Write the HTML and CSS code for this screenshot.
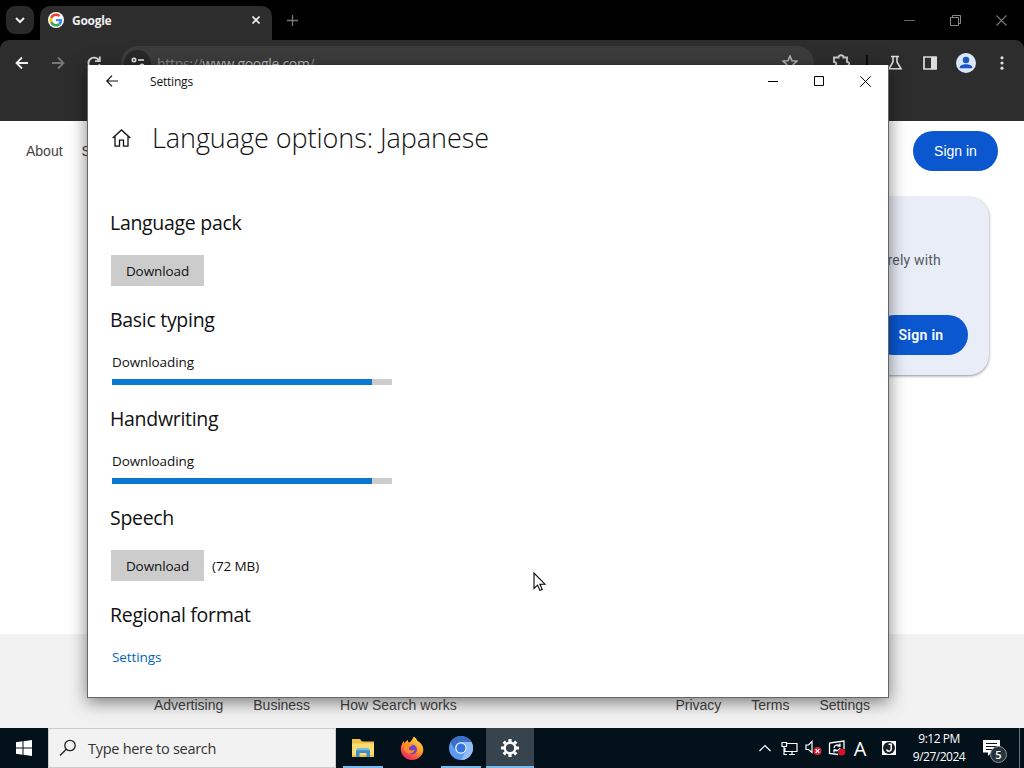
FILE: index.html
```html
<!DOCTYPE html>
<html lang="en">

<head>
  <meta charset="UTF-8">
  <meta name="viewport" content="width=device-width, initial-scale=1.0">
  <title>Language options</title>
  <link rel="stylesheet" href="styles.css">
</head>

<body>

<div class="desktop">

  <!-- Browser -->
  <div class="browser">
    <div class="tab-strip">
      <div class="tab-search">
        <svg width="10" height="10" viewBox="0 0 10 10" fill="none" stroke="#eee" stroke-width="2"><path d="M1 3l4 4 4-4"/></svg>
      </div>
      <div class="tab">
        <svg width="16" height="16" viewBox="0 0 48 48">
          <circle cx="24" cy="24" r="24" fill="#fff"/>
          <g transform="translate(4.500 4.500) scale(.81)">
            <path fill="#EA4335" d="M24 9.500c3.540 0 6.710 1.220 9.210 3.600l6.850-6.850C35.900 2.380 30.470 0 24 0 14.620 0 6.510 5.380 2.560 13.220l7.980 6.190C12.430 13.720 17.740 9.500 24 9.500z"/>
            <path fill="#4285F4" d="M46.980 24.550c0-1.570-.15-3.090-.38-4.550H24v9.020h12.940c-.58 2.960-2.260 5.480-4.780 7.180l7.730 6c4.510-4.180 7.090-10.360 7.090-17.650z"/>
            <path fill="#FBBC05" d="M10.530 28.590c-.48-1.450-.76-2.990-.76-4.590s.27-3.140.76-4.590l-7.980-6.190C.92 16.460 0 20.120 0 24s.92 7.540 2.560 10.780l7.970-6.190z"/>
            <path fill="#34A853" d="M24 48c6.480 0 11.930-2.130 15.890-5.810l-7.730-6c-2.150 1.450-4.920 2.300-8.160 2.300-6.260 0-11.570-4.220-13.470-9.910l-7.980 6.190C6.510 42.620 14.620 48 24 48z"/>
          </g>
        </svg>
        <span class="tab-title">Google</span>
        <svg width="8" height="8" viewBox="0 0 8 8" stroke="#eee" stroke-width="1.600"><path d="M.5.5l7 7M7.500.5l-7 7"/></svg>
      </div>
      <svg class="new-tab" width="11" height="11" viewBox="0 0 11 11" stroke="#777" stroke-width="1.300"><path d="M5.500 0v11M0 5.500h11"/></svg>
      <div class="browser-controls">
        <svg width="11" height="11" viewBox="0 0 11 11" stroke="#666"><path d="M0 5.500h11"/></svg>
        <svg width="11" height="11" viewBox="0 0 11 11" stroke="#888" fill="none"><path d="M.5 2.500h8v8h-8zM2.500 2.500v-2h8v8h-2"/></svg>
        <svg width="11" height="11" viewBox="0 0 11 11" stroke="#777" stroke-width="1.200"><path d="M.5.5l10 10M10.500.5l-10 10"/></svg>
      </div>
    </div>

    <div class="toolbar">
      <div class="nav-buttons">
        <svg width="14" height="14" viewBox="0 0 14 14" fill="none" stroke="#eee" stroke-width="1.800"><path d="M13 7H2M7 1.500L1.500 7 7 12.500"/></svg>
        <svg width="14" height="14" viewBox="0 0 14 14" fill="none" stroke="#777" stroke-width="1.800"><path d="M1 7h11M7 1.500L12.500 7 7 12.500"/></svg>
        <svg width="14" height="14" viewBox="0 0 14 14" fill="none" stroke="#ddd" stroke-width="1.800"><path d="M12 4.500A5.600 5.600 0 1 0 12.600 8M12.800 .5v4.700H8"/></svg>
      </div>
      <div class="omnibox">
        <div class="site-info">
          <svg width="14" height="14" viewBox="0 0 14 14" fill="none" stroke="#eee" stroke-width="1.600"><circle cx="3" cy="4" r="1.700"/><path d="M7 4h6M1 10h6"/><circle cx="11" cy="10" r="1.700"/></svg>
        </div>
        <div class="url">https://<span>www.google.com</span>/</div>
        <svg width="16" height="16" viewBox="0 0 16 16" fill="none" stroke="#bbb" stroke-width="1.500"><path d="M8 1l2 4.700 5 .4-3.800 3.300 1.200 5L8 11.700l-4.400 2.700 1.200-5L1 6.100l5-.4z"/></svg>
      </div>
      <div class="extensions">
        <svg width="18" height="18" viewBox="0 0 18 18" fill="none" stroke="#ccc" stroke-width="1.900"><path d="M2 3.500h4.500c0-3 5-3 5 0H15V8c3 0 3 4 0 4v4H2v-4c3 0 3-4 0-4z"/></svg>
        <div class="divider"></div>
        <svg width="16" height="16" viewBox="0 0 16 16" fill="none" stroke="#ddd" stroke-width="1.600"><path d="M4 1.500h8M6 2v5L2 13.800h12L10 7V2"/></svg>
        <svg width="16" height="16" viewBox="0 0 16 16"><path d="M2 2h12v12H2z" fill="none" stroke="#ddd" stroke-width="1.700"/><path d="M9 2h6v12H9z" fill="#ddd"/></svg>
        <svg width="20" height="20" viewBox="0 0 20 20"><circle cx="10" cy="10" r="10" fill="#dce6fa"/><circle cx="10" cy="7" r="3.200" fill="#1a56c4"/><path d="M3.800 15.200v-1c0-4 12.400-4 12.400 0v1z" fill="#1a56c4"/></svg>
        <svg width="16" height="16" viewBox="0 0 16 16" fill="#ddd"><circle cx="8" cy="2.800" r="1.600"/><circle cx="8" cy="8" r="1.600"/><circle cx="8" cy="13.200" r="1.600"/></svg>
      </div>
    </div>

    <div class="page">
      <div class="page-header">
        <a>About</a>
        <a>Store</a>
        <a class="sign-in">Sign in</a>
      </div>
      <div class="promo">
        <p>rely with</p>
        <a class="sign-in promo-button">Sign in</a>
      </div>
      <div class="page-footer">
        <div class="footer-links">
          <a>Advertising</a>
          <a>Business</a>
          <a>How Search works</a>
        </div>
        <div class="footer-links">
          <a>Privacy</a>
          <a>Terms</a>
          <a>Settings</a>
        </div>
      </div>
    </div>
  </div>

  <!-- Taskbar -->
  <div class="taskbar">
    <div class="start">
      <svg width="16" height="16" viewBox="0 0 16 16" fill="#fff"><path d="M0 2.200l6.500-.9v6.200H0zM7.500 1.200L16 0v7.500H7.500zM0 8.500h6.500v6.200L0 13.800zM7.500 8.500H16V16l-8.500-1.200z"/></svg>
    </div>
    <div class="search">
      <svg width="18" height="18" viewBox="0 0 18 18" fill="none" stroke="#222" stroke-width="1.300"><circle cx="11" cy="6.500" r="5.200"/><path d="M7.300 10.200L1 16.500"/></svg>
      <span>Type here to search</span>
    </div>
    <div class="apps">
      <div class="app running">
        <svg width="22" height="20" viewBox="0 0 22 20"><path d="M0 1h8l2 2.500h12V19H0z" fill="#f0bf45"/><path d="M0 5.500h22V17H0z" fill="#fbdc74"/><path d="M4 19v-6.500l1.500-2h11l1.500 2V19h-3.500v-4h-7v4z" fill="#3c8fca"/><path d="M5.500 10.500h11l1 1.800h-13z" fill="#6fc0ea"/></svg>
      </div>
      <div class="app">
        <svg width="24" height="24" viewBox="0 0 24 24">
          <defs>
            <linearGradient id="fox" x1=".8" y1="0" x2=".2" y2="1"><stop offset="0" stop-color="#ffe14a"/><stop offset=".45" stop-color="#ff9a27"/><stop offset=".8" stop-color="#f8404f"/><stop offset="1" stop-color="#df2668"/></linearGradient>
          </defs>
          <path d="M14 .5c2 1.500 3 3 3.400 4.600 1.800.4 5.900 4 5.900 8.600C23.300 19.500 18 24 12 24S.8 19 .8 13.200c0-3.300 1.200-6 3-8.200.1 1 .4 1.700.9 2.100 1-1.600 2-2.500 3.300-3-.2 1.200.1 2 .7 2.500C11 6.400 11.500 4 14 .5z" fill="url(#fox)"/>
          <circle cx="12" cy="13.500" r="5" fill="#7543c4"/>
          <path d="M4.500 7.500c2-.8 3.800-.3 5 .6 1.300-.2 3 .1 3.800 1-1.500.2-2 1.300-3.600 1.900-1.400.7-1 3 .8 3.500 1.600.5 2.600-.8 4-.3-1.400 3.500-6.300 4.600-9 1.500-1.900-2.200-2-5.600-1-8.200z" fill="#ff8a25"/>
        </svg>
      </div>
      <div class="app running">
        <svg width="24" height="24" viewBox="0 0 24 24"><circle cx="12" cy="12" r="12" fill="#5c9bf0"/><path d="M1.600 6A12 12 0 0 1 22.400 6H12a6 6 0 0 0-5.200 9z" fill="#3a6fc9"/><path d="M22.400 6A12 12 0 0 1 12 24l5.200-9A6 6 0 0 0 12 6z" fill="#92bdf8"/><circle cx="12" cy="12" r="5.800" fill="#e9f1fd"/><circle cx="12" cy="12" r="4.500" fill="#3474dc"/></svg>
      </div>
      <div class="app active">
        <svg width="18" height="18" viewBox="-9 -9 18 18" fill="none" stroke="#fff">
          <circle r="5.300" stroke-width="2.400"/>
          <path d="M0-9v3M0 9V6M-9 0h3M9 0H6M-6.300-6.300l2 2M6.300 6.300l-2-2M-6.300 6.300l2-2M6.300-6.300l-2 2" stroke-width="3.200"/>
        </svg>
      </div>
    </div>
    <div class="tray">
      <div class="tray-icon"><svg width="12" height="8" viewBox="0 0 12 8" fill="none" stroke="#fff" stroke-width="1.200"><path d="M.5 7L6 1.500 11.500 7"/></svg></div>
      <div class="tray-icon"><svg width="17" height="15" viewBox="0 0 17 15" fill="none" stroke="#fff" stroke-width="1.200"><path d="M6 2.500h10v8H4V7M8 13.500h6M11 10.500v3M1 1.500h4.500v4H1zM3 5.500v8h3"/></svg></div>
      <div class="tray-icon"><svg width="17" height="16" viewBox="0 0 17 16" fill="none" stroke="#fff" stroke-width="1.200"><path d="M1 5h2.500L7 1.500v11L3.500 9.500H1z"/><circle cx="12.500" cy="11" r="4" fill="#d92534" stroke="none"/><path d="M10.700 9.200l3.600 3.600M14.300 9.200l-3.600 3.600"/></svg></div>
      <div class="tray-icon"><svg width="18" height="16" viewBox="0 0 18 16" fill="none" stroke="#fff" stroke-width="1.300"><path d="M1.500 3L16 1v8M1.500 3v10.500L10 14.500M6 8c0-3 4-4 6-2M12 3.500V6H9.500M12 8c-1 3-4 3.500-6 1.800M6 12.500V9.800h2.500"/><circle cx="13.800" cy="12" r="3.500" fill="#d9132b" stroke="none"/></svg></div>
      <div class="tray-icon ime">A</div>
      <div class="tray-icon ime-mode"><svg width="14" height="14" viewBox="0 0 14 14"><path d="M0 0h14v14H0z" fill="#fff"/><circle cx="7" cy="7" r="6" fill="#1b1f22"/><path d="M6.500 3.200h2.700v4.500c0 3-4 3.200-4.500.8" fill="none" stroke="#fff" stroke-width="1.500"/></svg></div>
      <div class="clock">
        <div>9:12 PM</div>
        <div>9/27/2024</div>
      </div>
      <div class="notifications">
        <svg width="17" height="16" viewBox="0 0 17 16"><path d="M0 0h17v12.500H8.500L5 16v-3.500H0z" fill="#fff"/><path d="M3 3.500h11M3 6.500h11M3 9.500h8" stroke="#04131d"/></svg>
        <span class="badge">5</span>
      </div>
      <div class="show-desktop"></div>
    </div>
  </div>

  <!-- Settings window -->
  <div class="window">
    <div class="title-bar">
      <svg width="12" height="12" viewBox="0 0 12 12" fill="none" stroke="#111" stroke-width="1.200"><path d="M12 6H1M6 .7L.8 6 6 11.300"/></svg>
      <span class="title">Settings</span>
      <div class="window-controls">
        <svg width="10" height="11" viewBox="0 0 10 11" stroke="#000"><path d="M0 5.500h10"/></svg>
        <svg width="10" height="10" viewBox="0 0 10 10" stroke="#000" fill="none"><path d="M.5.5h9v9h-9z"/></svg>
        <svg width="11" height="11" viewBox="0 0 11 11" stroke="#000"><path d="M.3.300l10.400 10.400M10.700.3L.3 10.700"/></svg>
      </div>
    </div>
    <div class="heading">
      <svg width="19" height="18" viewBox="0 0 19 18" fill="none" stroke="#111" stroke-width="1.300"><path d="M.7 9L9.500.9 18.300 9M3 7.200v10h4.500v-6h4v6H16v-10"/></svg>
      <h1>Language options: Japanese</h1>
    </div>
    <div class="options">
      <section>
        <h2>Language pack</h2>
        <button>Download</button>
      </section>
      <section>
        <h2>Basic typing</h2>
        <p>Downloading</p>
        <div class="progress"><div class="bar" style="width: 260px"></div></div>
      </section>
      <section>
        <h2>Handwriting</h2>
        <p>Downloading</p>
        <div class="progress"><div class="bar" style="width: 260px"></div></div>
      </section>
      <section>
        <h2>Speech</h2>
        <div class="row">
          <button>Download</button>
          <span class="size">(72 MB)</span>
        </div>
      </section>
      <section>
        <h2>Regional format</h2>
        <a class="link">Settings</a>
      </section>
    </div>
  </div>

  <svg class="cursor" width="13" height="20" viewBox="0 0 13 20"><path d="M1 1v15.500l3.600-3.400 2.300 5.300 2.300-1-2.300-5.200H12z" fill="#fff" stroke="#000" stroke-width="1.100"/></svg>

</div>

</body>

</html>
```
FILE: styles.css
```css
* {
  box-sizing: border-box;
}

body {
  margin: 0;
  font-family: "Open Sans", "Noto Sans", sans-serif;
  color: #111;
}

svg {
  display: block;
  flex: none;
}

h1, h2, p {
  margin: 0;
  font-weight: 400;
}

.desktop {
  position: relative;
  width: 1024px;
  height: 768px;
  overflow: hidden;
  display: flex;
  flex-direction: column;
}

/* browser */
.browser {
  height: 728px;
  display: flex;
  flex-direction: column;
  background: #000;
}

.tab-strip {
  height: 40px;
  display: flex;
  align-items: center;
  padding-left: 6px;
}

.tab-search {
  width: 28px;
  height: 28px;
  margin-right: 6px;
  border-radius: 9px;
  background: #2a2a2a;
  display: flex;
  align-items: center;
  justify-content: center;
}

.tab {
  width: 232px;
  height: 34px;
  align-self: flex-end;
  display: flex;
  align-items: center;
  padding: 0 12px 6px 8px;
  border-radius: 10px 10px 0 0;
  background: #2d2d2d;
}

.tab-title {
  flex: 1;
  margin-left: 8px;
  color: #eee;
  font-size: 12px;
  font-weight: 700;
  letter-spacing: -0.3px;
}

.new-tab {
  margin-left: 15px;
}

.browser-controls {
  margin-left: auto;
  padding-right: 17px;
  display: flex;
  gap: 35px;
}

.toolbar {
  height: 81px;
  padding-top: 6px;
  display: flex;
  background: #2d2d2d;
  border-radius: 9px 9px 0 0;
}

.nav-buttons {
  width: 121px;
  height: 34px;
  padding-left: 15px;
  display: flex;
  align-items: center;
  gap: 22px;
}

.omnibox {
  width: 693px;
  height: 34px;
  padding: 0 16px 0 3px;
  display: flex;
  align-items: center;
  border-radius: 17px;
  background: #3c3c3c;
}

.site-info {
  width: 27px;
  height: 27px;
  border-radius: 50%;
  background: #292929;
  display: flex;
  align-items: center;
  justify-content: center;
}

.url {
  flex: 1;
  margin-left: 6px;
  color: #888;
  font-size: 14px;
  letter-spacing: -0.3px;
}

.url span {
  color: #bbb;
}

.extensions {
  height: 34px;
  padding-left: 18px;
  display: flex;
  align-items: center;
}

.extensions svg:nth-child(1) {
  margin-right: 16px;
}

.divider {
  width: 2px;
  height: 16px;
  background: #0c0c0c;
  margin-right: 19px;
}

.extensions svg:nth-child(3) {
  margin-right: 19px;
}

.extensions svg:nth-child(4) {
  margin-right: 18px;
}

.extensions svg:nth-child(5) {
  margin-right: 18px;
}

/* google page */
.page {
  flex: 1;
  display: flex;
  flex-direction: column;
  background: #fff;
  font-family: "Liberation Sans", Arial, sans-serif;
  font-size: 14px;
  color: #444;
}

.page-header {
  height: 60px;
  padding: 0 26px;
  display: flex;
  align-items: center;
  gap: 19px;
}

.sign-in {
  width: 85px;
  height: 40px;
  margin-left: auto;
  border-radius: 20px;
  background: #0b57d0;
  color: #fff;
  display: flex;
  align-items: center;
  justify-content: center;
}

.promo {
  width: 340px;
  height: 178px;
  margin: 16px 35px 0 auto;
  padding: 54px 21px 0;
  border-radius: 20px;
  background: #e9edf7;
  box-shadow: 0 1px 3px rgba(60, 64, 67, 0.6);
  font-family: Roboto, Arial, sans-serif;
}

.promo p {
  height: 64px;
  padding-right: 27px;
  text-align: right;
  color: #555a62;
  line-height: 18px;
  letter-spacing: 0.2px;
}

.promo-button {
  width: 94px;
  font-weight: 600;
  letter-spacing: 0.3px;
}

.page-footer {
  height: 94px;
  margin-top: auto;
  padding: 63px 154px 0;
  background: #f2f2f2;
  display: flex;
  justify-content: space-between;
  line-height: 16px;
}

.footer-links {
  display: flex;
  gap: 30px;
}

/* taskbar */
.taskbar {
  height: 40px;
  display: flex;
  background: #03111b;
  color: #fff;
}

.start {
  width: 48px;
  display: flex;
  align-items: center;
  justify-content: center;
}

.search {
  width: 288px;
  padding-left: 10px;
  display: flex;
  align-items: center;
  gap: 11px;
  background: #f2f2f2;
  border: 1px solid #c8ccce;
  color: #333;
  font-size: 14.5px;
  letter-spacing: -0.28px;
}

.apps {
  margin-left: 3px;
  display: flex;
}

.app {
  width: 48px;
  margin-right: 1px;
  display: flex;
  align-items: center;
  justify-content: center;
}

.running {
  background: linear-gradient(#76b9ed, #76b9ed) center bottom / 40px 2px no-repeat;
}

.active {
  background: #37444d;
  border-bottom: 2px solid #76b9ed;
  padding-top: 2px;
}

.tray {
  margin-left: auto;
  display: flex;
}

.tray-icon {
  width: 24px;
  display: flex;
  align-items: center;
  justify-content: center;
}

.ime {
  width: 22px;
  font-size: 20px;
  font-weight: 500;
}

.ime-mode {
  width: 36px;
}

.clock {
  width: 64px;
  padding-top: 2px;
  font-size: 12px;
  line-height: 18px;
  text-align: center;
  letter-spacing: -0.5px;
  white-space: nowrap;
}

.notifications {
  position: relative;
  width: 48px;
  padding: 12px 0 0 12px;
}

.badge {
  position: absolute;
  left: 19px;
  top: 18px;
  width: 17px;
  height: 17px;
  border: 1px solid #8b9297;
  border-radius: 50%;
  background: #28343c;
  font-size: 11px;
  font-weight: 600;
  line-height: 15px;
  text-align: center;
}

.show-desktop {
  width: 5px;
  border-left: 1px solid #6b757b;
}

/* settings window */
.window {
  position: absolute;
  left: 87px;
  top: 65px;
  width: 802px;
  height: 633px;
  border: 1px solid #666;
  border-top: none;
  background: #fff;
  box-shadow: 0 4px 16px rgba(0, 0, 0, 0.5);
}

.title-bar {
  height: 32px;
  display: flex;
  align-items: center;
  padding-left: 18px;
}

.title {
  margin-left: 32px;
  padding-top: 1px;
  font-size: 12px;
  letter-spacing: -0.2px;
}

.window-controls {
  margin-left: auto;
  padding-right: 17px;
  display: flex;
  align-items: center;
  gap: 36px;
}

.heading {
  height: 112px;
  padding: 20px 0 0 24px;
  display: flex;
  align-items: flex-start;
}

.heading svg {
  margin-top: 12px;
}

h1 {
  margin-left: 21px;
  font-size: 27px;
  font-weight: 330;
  line-height: 41px;
  letter-spacing: -0.06px;
}

.options {
  padding-left: 24px;
}

section {
  margin-bottom: 20px;
}

h2 {
  margin: 0 0 18px -2px;
  font-size: 19.5px;
  line-height: 28px;
  letter-spacing: -0.3px;
}

button {
  display: block;
  width: 93px;
  height: 31px;
  margin-left: -1px;
  padding: 0;
  border: none;
  background: #ccc;
  color: #111;
  font-family: inherit;
  font-size: 13.5px;
  letter-spacing: -0.1px;
}

.options p,
.link,
.size {
  font-size: 13.5px;
  line-height: 20px;
  letter-spacing: -0.1px;
}

.row {
  display: flex;
  align-items: center;
  gap: 8px;
}

.progress {
  width: 280px;
  height: 6px;
  margin-top: 7px;
  background: #ccc;
}

.bar {
  height: 6px;
  background: #0a78d0;
}

.options .link {
  display: block;
  color: #0067b8;
}

.cursor {
  position: absolute;
  left: 533px;
  top: 572px;
}
```
